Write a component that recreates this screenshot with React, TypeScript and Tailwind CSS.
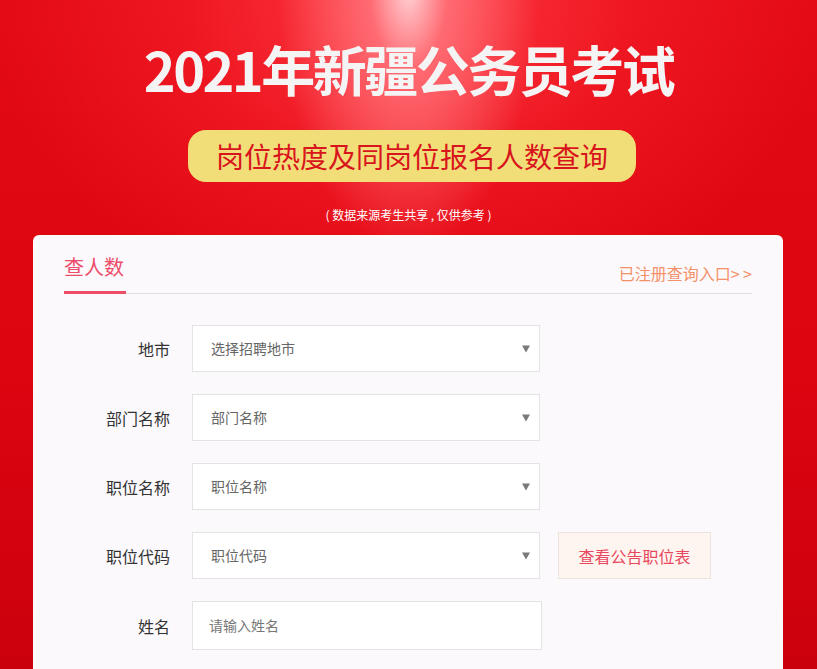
import type { ReactNode } from "react"

const FONT = '"Microsoft YaHei", "Noto Sans CJK SC", "Noto Sans", sans-serif'

function Arrow() {
  return (
    <span className="absolute right-[9px] top-1/2 -translate-y-1/2 h-0 w-0 border-x-[4px] border-x-transparent border-t-[7px] border-t-[#7a7a7a]" />
  )
}

function Row({ label, children }: { label: string; children: ReactNode }) {
  return (
    <div className="flex items-center">
      <div className="w-[106px] text-right text-[16px] text-[#333]">{label}</div>
      <div className="ml-[22px] flex items-center">{children}</div>
    </div>
  )
}

function SelectBox({ placeholder }: { placeholder: string }) {
  return (
    <div className="relative flex h-[47px] w-[348px] items-center border border-[#e3e3e3] bg-white pl-[18px] text-[14px] text-[#666]">
      {placeholder}
      <Arrow />
    </div>
  )
}

export default function App() {
  return (
    <div
      className="min-h-screen overflow-hidden bg-[radial-gradient(ellipse_130px_260px_at_50%_-10px,#ffd2d6_0%,#ff6a72_30%,rgba(255,50,60,0)_100%),radial-gradient(ellipse_420px_330px_at_50%_0%,#ff3a44_0%,rgba(255,40,50,0.4)_55%,rgba(230,10,20,0)_100%),linear-gradient(180deg,#e30a14_0%,#dc0510_55%,#c9000c_100%)]"
      style={{ fontFamily: FONT }}
    >
      <div className="flex flex-col items-center pt-[39px]">
        <h1 className="text-[54px] font-bold leading-[60px] tracking-[-2.5px] text-[#f4f4f4]">
          2021年新疆公务员考试
        </h1>
        <div className="ml-[7px] mt-[31px] flex h-[52px] w-[448px] items-center justify-center rounded-[18px] bg-[#f2de78] text-[28px] text-[#d8141c]">
          岗位热度及同岗位报名人数查询
        </div>
        <p className="mt-[25px] whitespace-pre text-[12px] leading-[16px] text-white">( 数据来源考生共享 , 仅供参考 )</p>
      </div>

      <div className="ml-[33px] mt-[12px] w-[750px] rounded-t-[6px] bg-[#fbf9fc] px-[31px] pb-[40px] pt-[18px]">
        <div className="flex items-end justify-between border-b border-[#e1dde1]">
          <div className="-mb-px border-b-[3px] border-[#ef4c69] pb-[10px] pr-[2px] text-[20px] leading-[28px] text-[#ec4e6a]">
            查人数
          </div>
          <div className="pb-[9px] text-[16px] leading-[22px] text-[#f3926a]">已注册查询入口&gt; &gt;</div>
        </div>

        <div className="mt-[31px] flex flex-col gap-[22px]">
          <Row label="地市">
            <SelectBox placeholder="选择招聘地市" />
          </Row>
          <Row label="部门名称">
            <SelectBox placeholder="部门名称" />
          </Row>
          <Row label="职位名称">
            <SelectBox placeholder="职位名称" />
          </Row>
          <Row label="职位代码">
            <SelectBox placeholder="职位代码" />
            <button
              type="button"
              className="ml-[18px] h-[47px] w-[153px] border border-[#ece3df] bg-[#fff5f0] text-[16px] text-[#e8485e]"
            >
              查看公告职位表
            </button>
          </Row>
          <Row label="姓名">
            <div className="flex h-[49px] w-[350px] items-center border border-[#e3e3e3] bg-white pl-[16px] text-[14px] text-[#777]">
              请输入姓名
            </div>
          </Row>
        </div>
      </div>
    </div>
  )
}
